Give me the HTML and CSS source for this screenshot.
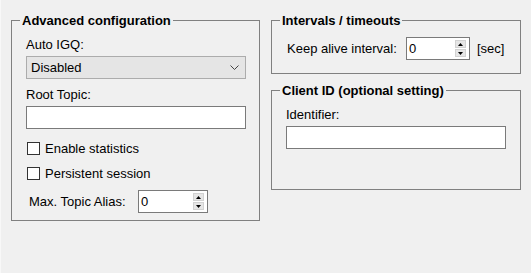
FILE: index.html
```html
<!DOCTYPE html>
<html lang="en">
<head>
  <meta charset="UTF-8" />
  <title>Advanced configuration</title>
  <link rel="stylesheet" href="styles.css">
</head>
<body>
  <div class="panel">
    <fieldset class="group group-adv">
      <legend>Advanced configuration</legend>
      <div class="group-body">
        <div class="field-label first">Auto IGQ:</div>
        <div class="combo">
          <span>Disabled</span>
          <svg class="chevron" width="9" height="5" viewBox="0 0 9 5"><path d="M0.5 0.5 L4.5 4.5 L8.5 0.5" fill="none" stroke="#444" stroke-width="1"/></svg>
        </div>
        <div class="field-label">Root Topic:</div>
        <div class="textbox"></div>
        <div class="check first-check"><span class="box"></span>Enable statistics</div>
        <div class="check"><span class="box"></span>Persistent session</div>
        <div class="spin-row alias-row">
          <span class="spin-label alias-label">Max. Topic Alias:</span>
          <div class="spin alias-spin">
            <span class="spin-value">0</span>
            <div class="spin-btns">
              <div class="spin-btn"><svg width="5" height="3" viewBox="0 0 5 3"><path d="M2.5 0 L5 3 L0 3 Z" fill="#000"/></svg></div>
              <div class="spin-btn"><svg width="5" height="3" viewBox="0 0 5 3"><path d="M0 0 L5 0 L2.5 3 Z" fill="#000"/></svg></div>
            </div>
          </div>
        </div>
      </div>
    </fieldset>

    <div class="right-col">
      <fieldset class="group group-timeouts">
        <legend>Intervals / timeouts</legend>
        <div class="group-body">
          <div class="spin-row keepalive-row">
            <span class="spin-label keepalive-label">Keep alive interval:</span>
            <div class="spin keepalive-spin">
              <span class="spin-value">0</span>
              <div class="spin-btns">
                <div class="spin-btn"><svg width="5" height="3" viewBox="0 0 5 3"><path d="M2.5 0 L5 3 L0 3 Z" fill="#000"/></svg></div>
                <div class="spin-btn"><svg width="5" height="3" viewBox="0 0 5 3"><path d="M0 0 L5 0 L2.5 3 Z" fill="#000"/></svg></div>
              </div>
            </div>
            <span class="unit">[sec]</span>
          </div>
        </div>
      </fieldset>

      <fieldset class="group group-client">
        <legend>Client ID (optional setting)</legend>
        <div class="group-body">
          <div class="field-label first">Identifier:</div>
          <div class="textbox"></div>
        </div>
      </fieldset>
    </div>
  </div>
</body>
</html>
```

FILE: styles.css
```css
html, body {
  margin: 0;
  height: 100%;
}
body {
  background: #f0f0f0;
  border-left: 1px solid #f8f8f8;
  box-sizing: border-box;
  color: #000;
  font-family: "Liberation Sans", Arial, sans-serif;
  font-size: 13px;
  line-height: 15px;
}
.panel {
  display: flex;
  align-items: flex-start;
  gap: 11px;
  padding: 13px 0 0 10px;
}
.group {
  margin: 0;
  padding: 0;
  min-width: 0;
  border: 1px solid #808080;
}
.group legend {
  margin-left: 8px;
  padding: 0 2px;
  font-weight: bold;
  line-height: 15px;
}
.group-adv {
  width: 249px;
  box-sizing: border-box;
}
.group-adv .group-body {
  padding: 0 13px 7px 14px;
}
.right-col {
  display: flex;
  flex-direction: column;
  width: 250px;
}
.group-timeouts .group-body {
  padding: 9px 0 13px 15px;
}
.group-client {
  margin-top: 9px;
}
.group-client .group-body {
  padding: 0 14px 40px 14px;
}
.field-label {
  margin-top: 8px;
  height: 15px;
}
.field-label.first {
  margin-top: 9px;
}
.combo {
  margin-top: 4px;
  height: 23px;
  box-sizing: border-box;
  width: 220px;
  border: 1px solid #acacac;
  background: #e5e5e5;
  display: flex;
  align-items: center;
  justify-content: space-between;
  padding: 0 6px 0 4px;
}
.chevron {
  display: block;
}
.textbox {
  margin-top: 4px;
  width: 220px;
  height: 23px;
  box-sizing: border-box;
  border: 1px solid #7a7a7a;
  background: #fff;
}
.check {
  display: flex;
  align-items: center;
  height: 15px;
  margin-top: 10px;
  margin-left: 1px;
}
.check.first-check {
  margin-top: 12px;
}
.check .box {
  width: 13px;
  height: 13px;
  box-sizing: border-box;
  border: 1px solid #333;
  background: #fff;
  margin-right: 5px;
}
.spin-row {
  display: flex;
  align-items: center;
}
.alias-row {
  margin-top: 9px;
  margin-left: 3px;
}
.alias-label {
  width: 109px;
}
.keepalive-label {
  width: 119px;
}
.spin {
  position: relative;
  height: 23px;
  box-sizing: border-box;
  border: 1px solid #7a7a7a;
  background: #fff;
  padding: 3px 0 0 2px;
}
.alias-spin {
  width: 70px;
}
.keepalive-spin {
  width: 64px;
}
.spin-btns {
  position: absolute;
  top: 2px;
  right: 3px;
  width: 11px;
  display: flex;
  flex-direction: column;
  gap: 1px;
}
.spin-btn {
  height: 8px;
  box-sizing: border-box;
  background: #e6e6e6;
  border: 1px solid #d2d2d2;
  display: flex;
  align-items: center;
  justify-content: center;
}
.spin-btn svg {
  display: block;
}
.unit {
  margin-left: 7px;
}
```
